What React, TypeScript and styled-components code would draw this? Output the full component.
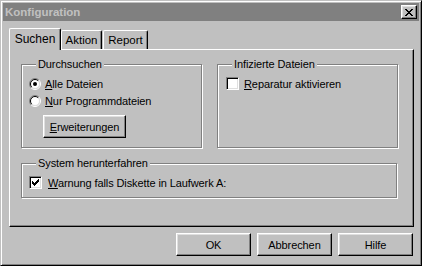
import React from 'react'
import styled, { createGlobalStyle } from 'styled-components'

const GlobalStyle = createGlobalStyle`
  html, body {
    margin: 0;
    padding: 0;
    background: #c0c0c0;
  }
  body {
    font-family: "Liberation Sans", Arial, sans-serif;
    font-size: 11px;
    color: #000;
  }
`

const Window = styled.div`
  box-sizing: border-box;
  width: 422px;
  height: 266px;
  background: #c0c0c0;
  border: 1px solid;
  border-color: #c0c0c0 #000 #000 #c0c0c0;
  box-shadow: inset 1px 1px #fff, inset -1px -1px #808080;
  padding: 2px;
  display: flex;
  flex-direction: column;
`

const TitleBar = styled.div`
  height: 18px;
  background: #808080;
  display: flex;
  align-items: center;
  justify-content: space-between;
  padding: 0 2px 0 2px;
`

const Title = styled.span`
  color: #c0c0c0;
  font-weight: bold;
  font-size: 11.5px;
`

const CloseButton = styled.button`
  box-sizing: border-box;
  width: 16px;
  height: 14px;
  padding: 0;
  margin: 0;
  background: #c0c0c0;
  border: 1px solid;
  border-color: #fff #000 #000 #fff;
  box-shadow: inset -1px -1px #808080, inset 1px 1px #dfdfdf;
  display: flex;
  align-items: center;
  justify-content: center;
`

const Body = styled.div`
  flex: 1;
  display: flex;
  flex-direction: column;
  padding: 7px 5px 0 6px;
`

const TabStrip = styled.div`
  display: flex;
  align-items: flex-end;
  height: 21px;
  position: relative;
  z-index: 1;
`

const Tab = styled.div<{ $active?: boolean; $width: number }>`
  box-sizing: border-box;
  width: ${p => p.$width}px;
  height: ${p => (p.$active ? 22 : 19)}px;
  margin-bottom: ${p => (p.$active ? -1 : 0)}px;
  margin-right: ${p => (p.$active ? 0 : 1)}px;
  background: #c0c0c0;
  border-left: 1px solid #fff;
  border-top: 1px solid #fff;
  border-right: 1px solid #000;
  border-radius: 2px 2px 0 0;
  box-shadow: inset -1px 0 #808080;
  display: flex;
  align-items: ${p => (p.$active ? 'flex-start' : 'center')};
  justify-content: center;
  padding-top: ${p => (p.$active ? 3 : 0)}px;
  font-size: ${p => (p.$active ? 12 : 11.5)}px;
`

const TabPanel = styled.div`
  box-sizing: border-box;
  height: 178px;
  border: 1px solid;
  border-color: #fff #000 #000 #fff;
  box-shadow: inset -1px -1px #808080;
  padding: 8px 11px 0 11px;
  display: flex;
  flex-direction: column;
  gap: 9px;
`

const GroupRow = styled.div`
  display: flex;
  gap: 15px;
`

const Group = styled.fieldset<{ $width: number; $height: number }>`
  box-sizing: border-box;
  width: ${p => p.$width}px;
  height: ${p => p.$height}px;
  margin: 0;
  padding: 2px 7px 0 7px;
  border: 1px solid #808080;
  box-shadow: inset 1px 1px #fff, 1px 1px #fff;
  display: flex;
  flex-direction: column;
  align-items: flex-start;
`

const Legend = styled.legend`
  margin-left: 7px;
  padding: 0 2px;
  background: #c0c0c0;
  line-height: 13px;
  font-size: 11px;
  letter-spacing: -0.1px;
`

const OptionRow = styled.label<{ $gap: number }>`
  display: flex;
  align-items: center;
  height: 17px;
  gap: ${p => p.$gap}px;
  font-size: 11px;
  letter-spacing: -0.1px;
  white-space: nowrap;
`

const CheckBox = styled.span`
  box-sizing: border-box;
  width: 13px;
  height: 13px;
  background: #fff;
  border: 1px solid;
  border-color: #808080 #fff #fff #808080;
  box-shadow: inset 1px 1px #000, inset -1px -1px #dfdfdf;
  display: flex;
  align-items: center;
  justify-content: center;
  flex: none;
`

const PushButton = styled.button<{ $width: number }>`
  box-sizing: border-box;
  width: ${p => p.$width}px;
  height: 23px;
  padding: 0;
  background: #c0c0c0;
  border: 1px solid;
  border-color: #fff #000 #000 #fff;
  box-shadow: inset -1px -1px #808080, inset 1px 1px #dfdfdf;
  font-family: "Liberation Sans", Arial, sans-serif;
  font-size: 11px;
  letter-spacing: -0.1px;
  color: #000;
`

const InnerButton = styled(PushButton)`
  margin: 6px 0 0 14px;
`

const ButtonRow = styled.div`
  display: flex;
  justify-content: flex-end;
  gap: 6px;
  padding: 6px 1px 0 0;
`

function Radio({ checked }: { checked?: boolean }) {
  return (
    <svg width="12" height="12" viewBox="0 0 12 12" style={{ flex: 'none' }}>
      <circle cx="6" cy="6" r="4.5" fill="#fff" />
      <path d="M2.1 9.9 A5.5 5.5 0 0 1 9.9 2.1" fill="none" stroke="#808080" />
      <path d="M9.9 2.1 A5.5 5.5 0 0 1 2.1 9.9" fill="none" stroke="#fff" />
      <path d="M2.8 9.2 A4.5 4.5 0 0 1 9.2 2.8" fill="none" stroke="#000" />
      <path d="M9.2 2.8 A4.5 4.5 0 0 1 2.8 9.2" fill="none" stroke="#dfdfdf" />
      {checked && <circle cx="6" cy="6" r="2" fill="#000" />}
    </svg>
  )
}

function CheckMark() {
  return (
    <svg width="7" height="7" viewBox="0 0 7 7" shapeRendering="crispEdges">
      <path
        d="M0 2h1v3h-1z M1 3h1v3h-1z M2 4h1v3h-1z M3 3h1v3h-1z M4 2h1v3h-1z M5 1h1v3h-1z M6 0h1v3h-1z"
        fill="#000"
      />
    </svg>
  )
}

function CloseGlyph() {
  return (
    <svg width="8" height="7" viewBox="0 0 8 7" shapeRendering="crispEdges">
      <path
        d="M0 0h2v1h-2z M6 0h2v1h-2z M1 1h2v1h-2z M5 1h2v1h-2z M2 2h4v1h-4z M3 3h2v1h-2z M2 4h4v1h-4z M1 5h2v1h-2z M5 5h2v1h-2z M0 6h2v1h-2z M6 6h2v1h-2z"
        fill="#000"
      />
    </svg>
  )
}

export default function App() {
  return (
    <>
      <GlobalStyle />
      <Window>
        <TitleBar>
          <Title>Konfiguration</Title>
          <CloseButton aria-label="Schließen">
            <CloseGlyph />
          </CloseButton>
        </TitleBar>
        <Body>
          <TabStrip>
            <Tab $active $width={52}>Suchen</Tab>
            <Tab $width={41}>Aktion</Tab>
            <Tab $width={45}>Report</Tab>
          </TabStrip>
          <TabPanel>
            <GroupRow>
              <Group $width={181} $height={90}>
                <Legend>Durchsuchen</Legend>
                <OptionRow $gap={4} style={{ marginTop: 2 }}>
                  <Radio checked />
                  <span><u>A</u>lle Dateien</span>
                </OptionRow>
                <OptionRow $gap={4}>
                  <Radio />
                  <span><u>N</u>ur Programmdateien</span>
                </OptionRow>
                <InnerButton $width={83}><u>E</u>rweiterungen</InnerButton>
              </Group>
              <Group $width={181} $height={90}>
                <Legend>Infizierte Dateien</Legend>
                <OptionRow $gap={5} style={{ marginTop: 2, marginLeft: 1 }}>
                  <CheckBox />
                  <span><u>R</u>eparatur aktivieren</span>
                </OptionRow>
              </Group>
            </GroupRow>
            <Group $width={376} $height={41}>
              <Legend>System herunterfahren</Legend>
              <OptionRow $gap={6} style={{ marginTop: 2 }}>
                <CheckBox>
                  <CheckMark />
                </CheckBox>
                <span><u>W</u>arnung falls Diskette in Laufwerk A:</span>
              </OptionRow>
            </Group>
          </TabPanel>
          <ButtonRow>
            <PushButton $width={75}>OK</PushButton>
            <PushButton $width={75}>Abbrechen</PushButton>
            <PushButton $width={75}>Hilfe</PushButton>
          </ButtonRow>
        </Body>
      </Window>
    </>
  )
}
